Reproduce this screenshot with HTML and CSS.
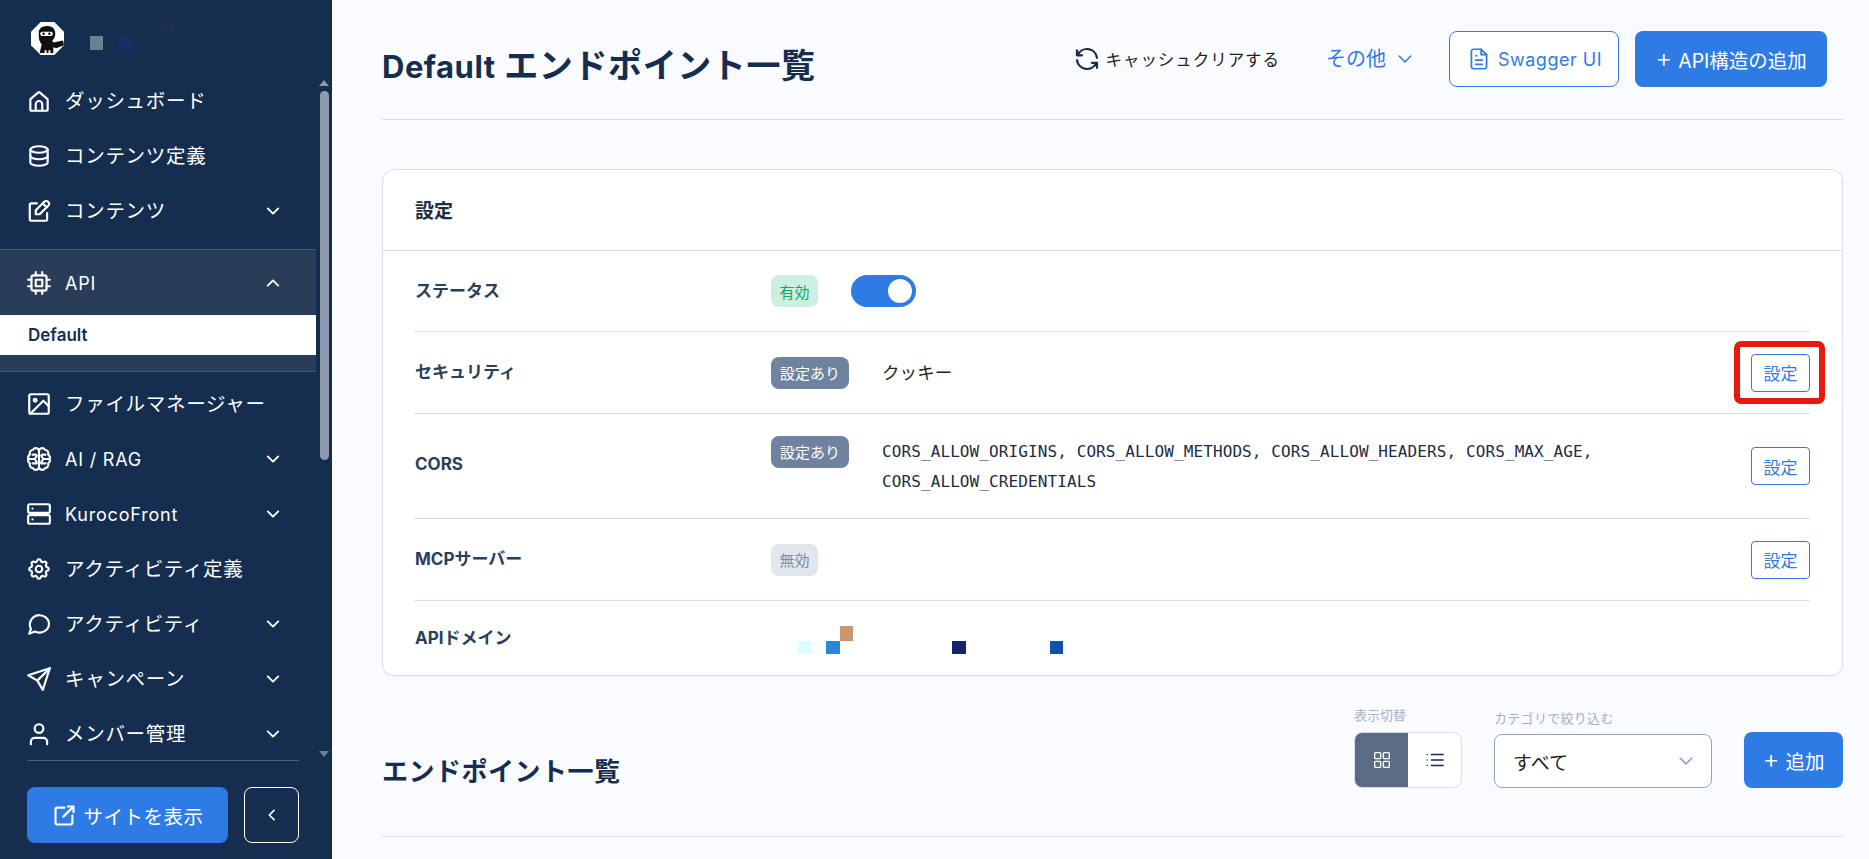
FILE: index.html
```html
<!DOCTYPE html>
<html lang="ja">
<head>
<meta charset="utf-8">
<title>Default エンドポイント一覧</title>
<link rel="stylesheet" href="styles.css">
</head>
<body>
<svg class="defs" xmlns="http://www.w3.org/2000/svg">
  <symbol id="i-home" viewBox="0 0 24 24"><path d="M4 20V10.800a1 1 0 0 1 .4-.8L11.400 4a1 1 0 0 1 1.200 0l7 6a1 1 0 0 1 .4.8V20a1 1 0 0 1-1 1H5a1 1 0 0 1-1-1z"/><path d="M9 21v-6a3 3 0 0 1 6 0v6"/></symbol>
  <symbol id="i-db" viewBox="0 0 24 24"><ellipse cx="12" cy="6" rx="8" ry="3"/><path d="M4 6v12c0 1.700 3.600 3 8 3s8-1.300 8-3V6"/><path d="M4 12c0 1.700 3.600 3 8 3s8-1.300 8-3"/></symbol>
  <symbol id="i-edit" viewBox="0 0 24 24"><path d="M10 5H5a1.500 1.500 0 0 0-1.500 1.500v13A1.500 1.500 0 0 0 5 21h13a1.500 1.500 0 0 0 1.500-1.500V14"/><path d="M20.500 7.100a2.500 2.500 0 0 0-3.600-3.600L9 11.400V15h3.600z"/><path d="M15.500 5l3.500 3.500"/></symbol>
  <symbol id="i-cpu" viewBox="0 0 24 24"><rect x="5" y="5" width="14" height="14" rx="2"/><rect x="9" y="9" width="6" height="6"/><path d="M2 9h3M2 15h3M19 9h3M19 15h3M9 2v3M15 2v3M9 19v3M15 19v3"/></symbol>
  <symbol id="i-image" viewBox="0 0 24 24"><rect x="3" y="3" width="18" height="18" rx="1.500"/><circle cx="8.500" cy="8.500" r="1.300"/><path d="M21 14l-5-5L4 21"/></symbol>
  <symbol id="i-brain" viewBox="0 0 24 24"><path d="M12 4v16M12 4a3 3 0 0 0-5.500-.5A3.500 3.500 0 0 0 3.500 8 3.800 3.800 0 0 0 2 12a3.800 3.800 0 0 0 1.500 4A3.500 3.500 0 0 0 6.500 20.500 3 3 0 0 0 12 20M12 4a3 3 0 0 1 5.500-.5A3.500 3.500 0 0 1 20.500 8 3.800 3.800 0 0 1 22 12a3.800 3.800 0 0 1-1.500 4 3.500 3.500 0 0 1-3 4.500A3 3 0 0 1 12 20"/><path d="M3 12h5l2-3M21 12h-5l-2-3M6 8h3M18 8h-3M6 16h4M18 16h-4M8 12l2 3M16 12l-2 3"/></symbol>
  <symbol id="i-server" viewBox="0 0 24 24"><rect x="2" y="3" width="20" height="8" rx="1.500"/><rect x="2" y="13" width="20" height="8" rx="1.500"/><path d="M6 7h.01M6 17h.01"/></symbol>
  <symbol id="i-gear" viewBox="0 0 24 24"><path d="M10.325 4.317c.426-1.756 2.924-1.756 3.35 0a1.724 1.724 0 0 0 2.573 1.066c1.543-.94 3.31.826 2.37 2.37a1.724 1.724 0 0 0 1.065 2.572c1.756.426 1.756 2.924 0 3.350a1.724 1.724 0 0 0-1.066 2.573c.94 1.543-.826 3.310-2.370 2.370a1.724 1.724 0 0 0-2.572 1.065c-.426 1.756-2.924 1.756-3.350 0a1.724 1.724 0 0 0-2.573-1.066c-1.543.94-3.310-.826-2.370-2.370a1.724 1.724 0 0 0-1.065-2.572c-1.756-.426-1.756-2.924 0-3.350a1.724 1.724 0 0 0 1.066-2.573c-.94-1.543.826-3.310 2.370-2.370 1 .608 2.296.07 2.572-1.065z"/><circle cx="12" cy="12" r="3"/></symbol>
  <symbol id="i-chat" viewBox="0 0 24 24"><path d="M3 21l1.500-4.500C2.500 13 3.400 8.400 6.700 5.800c3.500-2.700 8.600-2.500 11.800.3 3.200 2.800 3.700 7.300 1 10.600-2.700 3.200-7.600 4.200-11.500 2.300z"/></symbol>
  <symbol id="i-send" viewBox="0 0 24 24"><path d="M10.500 13.500L22 2"/><path d="M22 2l-6.500 20-5-8.500L2 8.500z"/></symbol>
  <symbol id="i-user" viewBox="0 0 24 24"><circle cx="12" cy="7" r="4"/><path d="M4.500 21.500V19a3.500 3.500 0 0 1 3.500-3.500h8a3.500 3.500 0 0 1 3.500 3.500v2.500"/></symbol>
  <symbol id="i-down" viewBox="0 0 24 24"><path d="M5 8.500l7 7 7-7"/></symbol>
  <symbol id="i-up" viewBox="0 0 24 24"><path d="M5 15.500l7-7 7 7"/></symbol>
  <symbol id="i-left" viewBox="0 0 24 24"><path d="M15 5l-7 7 7 7"/></symbol>
  <symbol id="i-ext" viewBox="0 0 24 24"><path d="M12 5H6a2 2 0 0 0-2 2v11a2 2 0 0 0 2 2h11a2 2 0 0 0 2-2v-6"/><path d="M11 13l9-9M15 4h5v5"/></symbol>
  <symbol id="i-refresh" viewBox="0 0 24 24"><path d="M20 11A8.100 8.100 0 0 0 4.500 9M4 5v4h4"/><path d="M4 13a8.100 8.100 0 0 0 15.500 2M20 19v-4h-4"/></symbol>
  <symbol id="i-file" viewBox="0 0 24 24"><path d="M14 3H7a2 2 0 0 0-2 2v14a2 2 0 0 0 2 2h10a2 2 0 0 0 2-2V8z"/><path d="M14 3v5h5M9 9h1M9 13h6M9 17h6"/></symbol>
  <symbol id="i-grid" viewBox="0 0 24 24"><rect x="4" y="4" width="6.500" height="6.500" rx="1"/><rect x="13.500" y="4" width="6.500" height="6.500" rx="1"/><rect x="4" y="13.500" width="6.500" height="6.500" rx="1"/><rect x="13.500" y="13.500" width="6.500" height="6.500" rx="1"/></symbol>
  <symbol id="i-list" viewBox="0 0 24 24"><path d="M8 6h13M8 12h13M8 18h13M3.500 6h.01M3.500 12h.01M3.500 18h.01"/></symbol>
</svg>

<div class="app">
  <aside class="sidebar">
    <div class="brand">
      <svg class="logo" viewBox="0 0 34 34" xmlns="http://www.w3.org/2000/svg">
        <path class="logo-bg" d="M10 0h14l10 10v14L24 34H10L0 24V10z"/>
        <path class="logo-ink" d="M8 11c0-5 4-7 9-7s8 3 8 8c0 3-1 5-3 7l1 2 10-2 1 5-8 3-3-1v6h-3v-3h-2v3h-2v-3h-2v3H9l2-9c-2-2-3-5-3-9z"/>
        <rect class="logo-bg" x="9.500" y="10" width="13" height="4.500" rx="2.200"/>
        <circle class="logo-ink" cx="13" cy="12.200" r="1.300"/>
        <circle class="logo-ink" cx="19" cy="12.200" r="1.300"/>
      </svg>
      <i class="pix pix-a"></i><i class="pix pix-b"></i><i class="pix pix-c"></i>
    </div>
    <div class="nav-wrap">
      <nav class="nav">
        <a class="nav-item"><svg class="ico"><use href="#i-home"/></svg><span class="nav-label">ダッシュボード</span></a>
        <a class="nav-item"><svg class="ico"><use href="#i-db"/></svg><span class="nav-label">コンテンツ定義</span></a>
        <a class="nav-item"><svg class="ico"><use href="#i-edit"/></svg><span class="nav-label">コンテンツ</span><svg class="chev"><use href="#i-down"/></svg></a>
        <div class="nav-group">
          <a class="nav-item nav-item-open"><svg class="ico"><use href="#i-cpu"/></svg><span class="nav-label nav-label-en">API</span><svg class="chev"><use href="#i-up"/></svg></a>
          <a class="nav-sub">Default</a>
        </div>
        <a class="nav-item"><svg class="ico"><use href="#i-image"/></svg><span class="nav-label">ファイルマネージャー</span></a>
        <a class="nav-item"><svg class="ico"><use href="#i-brain"/></svg><span class="nav-label nav-label-en">AI / RAG</span><svg class="chev"><use href="#i-down"/></svg></a>
        <a class="nav-item"><svg class="ico"><use href="#i-server"/></svg><span class="nav-label nav-label-en">KurocoFront</span><svg class="chev"><use href="#i-down"/></svg></a>
        <a class="nav-item"><svg class="ico"><use href="#i-gear"/></svg><span class="nav-label">アクティビティ定義</span></a>
        <a class="nav-item"><svg class="ico"><use href="#i-chat"/></svg><span class="nav-label">アクティビティ</span><svg class="chev"><use href="#i-down"/></svg></a>
        <a class="nav-item"><svg class="ico"><use href="#i-send"/></svg><span class="nav-label">キャンペーン</span><svg class="chev"><use href="#i-down"/></svg></a>
        <a class="nav-item"><svg class="ico"><use href="#i-user"/></svg><span class="nav-label">メンバー管理</span><svg class="chev"><use href="#i-down"/></svg></a>
      </nav>
      <div class="scrollbar">
        <span class="arrow-up"></span>
        <span class="thumb"></span>
        <span class="arrow-down"></span>
      </div>
    </div>
    <div class="side-foot">
      <a class="site-btn"><svg class="ico-sm"><use href="#i-ext"/></svg>サイトを表示</a>
      <button class="collapse-btn"><svg class="ico-xs"><use href="#i-left"/></svg></button>
    </div>
  </aside>

  <main class="main">
    <header class="page-head">
      <h1 class="page-title"><span class="title-en">Default</span> エンドポイント一覧</h1>
      <div class="head-actions">
        <a class="cache"><svg class="ico-refresh"><use href="#i-refresh"/></svg>キャッシュクリアする</a>
        <a class="other">その他<svg class="ico-other"><use href="#i-down"/></svg></a>
        <a class="btn btn-outline"><svg class="ico-file"><use href="#i-file"/></svg>Swagger UI</a>
        <a class="btn btn-primary btn-api"><span class="plus">+</span> API構造の追加</a>
      </div>
    </header>

    <section class="card">
      <h2 class="card-title">設定</h2>
      <div class="card-body">
        <div class="row row-status">
          <div class="row-label">ステータス</div>
          <div class="row-value">
            <span class="badge badge-on">有効</span>
            <span class="toggle"><span class="knob"></span></span>
          </div>
        </div>
        <div class="row row-sec">
          <div class="row-label">セキュリティ</div>
          <div class="row-value">
            <span class="badge badge-set">設定あり</span>
            <span class="val-text">クッキー</span>
          </div>
          <a class="set-btn set-btn-marked">設定</a>
        </div>
        <div class="row row-cors">
          <div class="row-label">CORS</div>
          <div class="row-value row-value-top">
            <span class="badge badge-set">設定あり</span>
            <code class="val-code">CORS_ALLOW_ORIGINS, CORS_ALLOW_METHODS, CORS_ALLOW_HEADERS, CORS_MAX_AGE,<br>CORS_ALLOW_CREDENTIALS</code>
          </div>
          <a class="set-btn">設定</a>
        </div>
        <div class="row row-mcp">
          <div class="row-label">MCPサーバー</div>
          <div class="row-value">
            <span class="badge badge-off">無効</span>
          </div>
          <a class="set-btn">設定</a>
        </div>
        <div class="row row-domain">
          <div class="row-label">APIドメイン</div>
          <div class="row-value domain-value">
            <i class="dpix d1"></i><i class="dpix d2"></i><i class="dpix d3"></i><i class="dpix d4"></i><i class="dpix d5"></i>
          </div>
        </div>
      </div>
    </section>

    <section class="list-head">
      <h2 class="list-title">エンドポイント一覧</h2>
      <div class="list-tools">
        <div class="field">
          <span class="field-label">表示切替</span>
          <div class="view-switch">
            <span class="view-btn view-on"><svg class="ico-view"><use href="#i-grid"/></svg></span>
            <span class="view-btn"><svg class="ico-view"><use href="#i-list"/></svg></span>
          </div>
        </div>
        <div class="field field-select">
          <span class="field-label">カテゴリで絞り込む</span>
          <div class="select">すべて<svg class="select-chev"><use href="#i-down"/></svg></div>
        </div>
        <a class="btn btn-primary btn-add"><span class="plus">+</span> 追加</a>
      </div>
    </section>
  </main>
</div>
</body>
</html>
```
FILE: styles.css
```css
* { box-sizing: border-box; }
html, body { margin: 0; height: 100%; overflow: hidden; }
body {
  font-family: Inter, "Noto Sans CJK JP", "Noto Sans", sans-serif;
  color: #152e4f;
  background: #fafbfe;
}
.defs { display: none; }
svg { fill: none; stroke: currentColor; stroke-width: 2; stroke-linecap: round; stroke-linejoin: round; flex: none; }

.app { display: flex; height: 859px; }

/* sidebar */
.sidebar { width: 332px; flex: none; background: #152e4f; color: #fff; display: flex; flex-direction: column; }
.brand { height: 73px; flex: none; padding: 22px 0 0 31px; position: relative; }
.logo { width: 33px; height: 33px; stroke: none; display: block; }
.logo-bg { fill: #fff; stroke: none; }
.logo-ink { fill: #111; stroke: none; }
.pix { position: absolute; display: block; }
.pix-a { left: 90px; top: 36px; width: 13px; height: 14px; background: #6b7f8f; }
.pix-b { left: 118px; top: 36px; width: 14px; height: 14px; background: #172d66; }
.pix-c { left: 160px; top: 23px; width: 14px; height: 13px; background: #1c2d4e; }

.nav-wrap { height: 687px; display: flex; flex: none; }
.nav { width: 316px; flex: none; }
.nav-item { height: 55px; display: flex; align-items: center; padding-left: 26px; color: #fff; }
.ico { width: 26px; height: 26px; stroke-width: 2; }
.nav-label { margin-left: 13px; padding-bottom: 2px; font-size: 19.500px; letter-spacing: 0.700px; white-space: nowrap; flex: 1; font-weight: 400; }
.nav-label-en { font-size: 18px; letter-spacing: 0.800px; line-height: 30px; padding: 2px 0 0; }
.chev { width: 18px; height: 18px; margin-right: 34px; stroke-width: 2.500; }
.nav-group { margin: 11px 0 4px; background: #293d59; border-top: 1px solid #44597a; border-bottom: 1px solid #44597a; height: 123px; }
.nav-item-open { height: 65px; }
.nav-sub { display: flex; align-items: center; height: 40px; background: #fff; color: #152e4f; padding-left: 28px; font-size: 17px; font-weight: 600; }

.scrollbar { width: 16px; flex: none; display: flex; flex-direction: column; align-items: center; }
.arrow-up { width: 0; height: 0; margin-top: 7px; border: 5px solid transparent; border-top: 0; border-bottom: 6px solid #8d9aab; }
.thumb { width: 9px; height: 369px; margin-top: 5px; border-radius: 5px; background: #8d9aab; }
.arrow-down { width: 0; height: 0; margin-top: 291px; border: 5px solid transparent; border-bottom: 0; border-top: 6px solid #71808f; }

.side-foot { margin: 0 33px 0 27px; flex: none; border-top: 1px solid #4c6077; padding-top: 26px; display: flex; gap: 16px; }
.site-btn { width: 201px; height: 56px; border-radius: 8px; background: #2e7be6; color: #fff; display: flex; align-items: center; justify-content: center; gap: 5px; font-size: 19.500px; letter-spacing: 0.500px; }
.ico-sm { width: 27px; height: 27px; stroke-width: 1.900; }
.collapse-btn { width: 55px; height: 56px; border: 1px solid #fff; border-radius: 8px; background: transparent; color: #fff; display: flex; align-items: center; justify-content: center; padding: 0; }
.ico-xs { width: 16px; height: 16px; stroke-width: 2.500; }

/* main */
.main { flex: 1; min-width: 0; padding: 0 26px 0 50px; }
.page-head { height: 120px; padding-bottom: 1px; border-bottom: 1px solid #d5dfea; display: flex; align-items: center; justify-content: space-between; }
.page-title { margin: 8px 0 0; font-size: 34px; font-weight: 700; letter-spacing: 0.600px; white-space: nowrap; }
.title-en { font-size: 31px; letter-spacing: 0.500px; }
.head-actions { display: flex; align-items: center; margin-right: 16px; }
.cache { display: flex; align-items: center; gap: 4px; font-size: 16.500px; letter-spacing: 0.950px; color: #222; white-space: nowrap; margin-right: 46px; padding-bottom: 1px; }
.ico-refresh { width: 30px; height: 30px; color: #152e4f; stroke-width: 1.800; }
.other { display: flex; align-items: center; gap: 9px; color: #2e7be6; font-size: 20px; margin-right: 34px; white-space: nowrap; padding-bottom: 4px; }
.ico-other { width: 20px; height: 20px; stroke-width: 1.800; margin-top: 4px; }
.btn { display: flex; align-items: center; justify-content: center; height: 56px; border-radius: 8px; font-size: 18px; letter-spacing: 0.500px; white-space: nowrap; }
.btn-outline { width: 170px; background: #fff; border: 1px solid #2e7be6; color: #2e7be6; gap: 6px; margin-right: 16px; }
.ico-file { width: 26px; height: 26px; stroke-width: 1.600; }
.btn-primary { background: #2e7be6; color: #fff; }
.btn-api { width: 192px; font-size: 19.500px; letter-spacing: 0; gap: 6px; }
.plus { font-size: 26px; line-height: 1; font-weight: 300; margin-top: -3px; }

.card { margin-top: 49px; background: #fff; border: 1px solid #d5deee; border-radius: 12px; height: 507px; box-shadow: 0 1px 2px rgba(21, 46, 79, 0.05); }
.card-title { margin: 0; height: 81px; display: flex; align-items: center; padding: 0 0 2px 32px; font-size: 19px; font-weight: 700; border-bottom: 1px solid #d5dfea; color: #1c2c42; }
.card-body { padding: 0 32px 0 31px; }
.row { display: flex; align-items: center; border-bottom: 1px solid #d5dfea; position: relative; }
.row:last-child { border-bottom: 0; }
.row-status { height: 81px; }
.row-sec { height: 82px; }
.row-cors { height: 105px; }
.row-mcp { height: 82px; }
.row-domain { height: 75px; }
.row-label { width: 357px; flex: none; padding-left: 1px; font-size: 17px; font-weight: 700; color: #2a3f5a; position: relative; top: -2px; }
.row-value { flex: 1; min-width: 0; display: flex; align-items: center; }
.row-value-top { align-items: flex-start; }
.badge { display: inline-flex; align-items: center; justify-content: center; height: 32px; border-radius: 8px; font-size: 15px; flex: none; white-space: nowrap; }
.badge-on { width: 47px; background: #cdeee0; color: #17a566; }
.badge-set { width: 78px; background: #6f83a1; color: #fff; }
.badge-off { width: 47px; background: #e2e6ee; color: #7d8ba1; }
.toggle { margin-left: 33px; width: 65px; height: 32px; border-radius: 16px; background: #2e7be6; position: relative; display: block; }
.knob { position: absolute; right: 4px; top: 4px; width: 24px; height: 24px; border-radius: 50%; background: #fff; }
.val-text { margin-left: 33px; font-size: 17.500px; letter-spacing: 0.100px; color: #222; position: relative; top: -1px; }
.val-code { margin-left: 33px; font-family: "DejaVu Sans Mono", monospace; font-size: 16px; letter-spacing: 0.100px; line-height: 30px; color: #1c2c42; white-space: nowrap; padding-top: 1px; }
.set-btn { width: 59px; height: 38px; flex: none; border: 1px solid #2e7be6; border-radius: 4px; color: #2e7be6; background: #fff; display: flex; align-items: center; justify-content: center; font-size: 17px; }
.set-btn-marked { position: relative; }
.set-btn-marked::after { content: ""; box-sizing: border-box; position: absolute; left: -18px; top: -14px; width: 91px; height: 63px; border: 6px solid #e8190f; border-radius: 7px; }
.domain-value { position: relative; height: 40px; }
.dpix { position: absolute; display: block; }
.d1 { left: 69px; top: 7px; width: 13px; height: 15px; background: #c9966f; }
.d2 { left: 27px; top: 22px; width: 13px; height: 13px; background: #dcfdfd; }
.d3 { left: 55px; top: 22px; width: 14px; height: 13px; background: #2c86d8; }
.d4 { left: 181px; top: 22px; width: 14px; height: 13px; background: #12246f; }
.d5 { left: 279px; top: 22px; width: 13px; height: 13px; background: #1252a8; }

.list-head { height: 161px; border-bottom: 1px solid #d5dfea; display: flex; align-items: flex-start; justify-content: space-between; padding-top: 31px; }
.list-title { margin: 44px 0 0; font-size: 26px; font-weight: 700; letter-spacing: 0.500px; white-space: nowrap; }
.list-tools { display: flex; align-items: flex-end; }
.field { display: flex; flex-direction: column; }
.field-label { font-size: 13px; line-height: 16px; color: #a5b1c6; margin-bottom: 9px; white-space: nowrap; }
.view-switch { width: 108px; height: 56px; display: flex; border: 1px solid #d5deee; border-radius: 8px; background: #fff; overflow: hidden; }
.view-btn { width: 54px; display: flex; align-items: center; justify-content: center; color: #152e4f; }
.view-on { background: #5a6b83; color: #fff; }
.ico-view { width: 22px; height: 22px; stroke-width: 1.500; }
.field-select { margin-left: 32px; }
.field-select .field-label { letter-spacing: 0.300px; margin-bottom: 8px; }
.select { width: 218px; height: 54px; border: 1px solid #8fa5c6; border-radius: 8px; background: #fff; display: flex; align-items: center; justify-content: space-between; padding: 0 15px 0 18px; font-size: 19px; color: #222; }
.select-chev { width: 20px; height: 20px; color: #8fa5c6; }
.btn-add { width: 99px; margin-left: 32px; font-size: 19.500px; letter-spacing: 0; gap: 6px; }
```
